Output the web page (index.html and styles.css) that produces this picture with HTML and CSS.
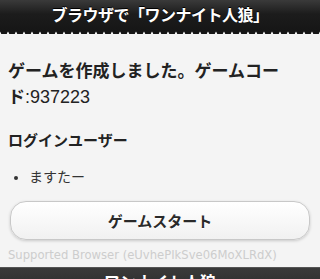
FILE: index.html
```
<!DOCTYPE html>
<html lang="ja">
<head>
<meta charset="utf-8">
<link rel="stylesheet" href="styles.css">
</head>
<body>
<div class="page">
  <header class="bar">
    <h1 class="bar-title">ブラウザで「ワンナイト人狼」</h1>
  </header>
  <main class="content">
    <h2 class="notice">ゲームを作成しました。ゲームコード<span class="code">:937223</span></h2>
    <h3 class="section">ログインユーザー</h3>
    <ul class="users">
      <li>ますたー</li>
    </ul>
    <button class="btn" type="button">ゲームスタート</button>
    <p class="support">Supported Browser (eUvhePIkSve06MoXLRdX)</p>
  </main>
  <footer class="foot">
    <span class="foot-title">ワンナイト人狼</span>
  </footer>
</div>
</body>
</html>
```
FILE: styles.css
```
html, body {
  margin: 0;
  padding: 0;
  background: #f4f4f4;
}
body {
  font-family: "Liberation Sans", "Noto Sans CJK JP", sans-serif;
  color: #222;
  width: 320px;
  height: 279px;
  overflow: hidden;
}
.page {
  display: flex;
  flex-direction: column;
}
.bar {
  position: relative;
  height: 31px;
  background: linear-gradient(#3a3a3a, #1c1c1c 45%, #161616);
  display: flex;
  align-items: center;
  justify-content: center;
}
.bar::after {
  content: "";
  position: absolute;
  left: 0;
  right: 0;
  top: 31px;
  height: 3px;
  background: radial-gradient(circle at 4px 0, #161616 3.5px, transparent 4px) 0 0 / 8px 3px repeat-x;
}
.bar-title {
  margin: 0;
  font-size: 16px;
  line-height: 20px;
  font-weight: bold;
  color: #fff;
  text-shadow: 0 -1px 0 #000;
  letter-spacing: -0.5px;
}
.content {
  padding: 28px 8px 0;
  display: flex;
  flex-direction: column;
}
.notice {
  margin: 0;
  max-width: 286px;
  font-size: 17px;
  line-height: 26px;
  font-weight: bold;
  color: #222;
}
.code {
  font-weight: normal;
  font-size: 18px;
  line-height: 20px;
}
.section {
  margin: 20px 0 0;
  font-size: 15px;
  line-height: 20px;
  font-weight: bold;
  color: #222;
}
.users {
  margin: 16px 0 0;
  padding: 0 0 0 21px;
  font-size: 14px;
  line-height: 20px;
  color: #333;
}
.btn {
  margin: 14px 2px 0;
  height: 39px;
  border: 1px solid #c8c8c8;
  border-radius: 16px;
  background: linear-gradient(#ffffff, #f1f1f1);
  box-shadow: 0 1px 3px rgba(0,0,0,0.18);
  font-family: "Noto Sans CJK JP", sans-serif;
  font-size: 15px;
  font-weight: bold;
  color: #2a2a2a;
  text-shadow: 0 1px 0 #fff;
}
.support {
  margin: 6px 0 0;
  font-family: "DejaVu Sans", sans-serif;
  font-size: 11.6px;
  line-height: 18px;
  color: #cdcdcd;
  white-space: nowrap;
}
.foot {
  margin-top: 3px;
  height: 40px;
  border-top: 1px solid #555;
  background: linear-gradient(#3a3a3a, #222);
  display: flex;
  justify-content: center;
  align-items: flex-start;
}
.foot-title {
  padding-top: 5px;
  font-size: 16px;
  line-height: 20px;
  font-weight: bold;
  color: #fff;
}
```
